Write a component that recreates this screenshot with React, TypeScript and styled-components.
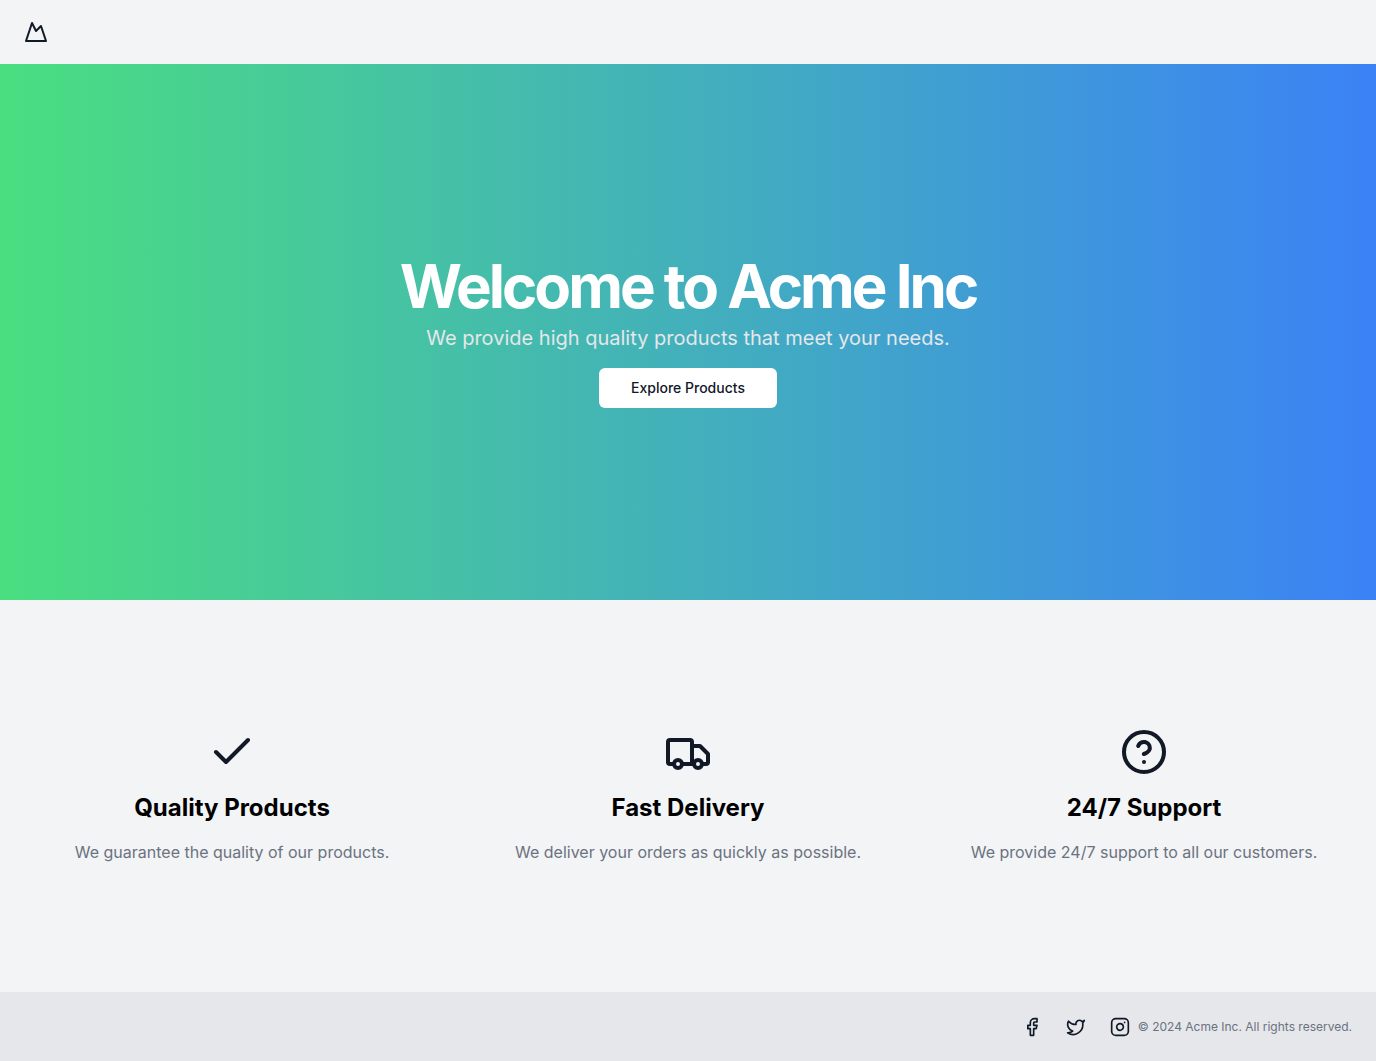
import React from "react";
import styled, { createGlobalStyle } from "styled-components";
import { Check, CircleHelp, Facebook, Twitter, Instagram } from "lucide-react";

const GlobalStyle = createGlobalStyle`
  *, *::before, *::after { box-sizing: border-box; }
  body { margin: 0; background: #f3f4f6; font-family: Inter, sans-serif; color: #030712; line-height: 24px; }
  h1, h2, p { margin: 0; }
`;

const Page = styled.div`
  display: flex;
  flex-direction: column;
  min-height: 100vh;
`;

const Header = styled.header`
  display: flex;
  align-items: center;
  height: 64px;
  padding: 0 24px;
`;

const IconLink = styled.a`
  display: flex;
  color: #111827;
`;

const Main = styled.main`
  flex: 1;
`;

const Hero = styled.section`
  display: flex;
  flex-direction: column;
  align-items: center;
  padding: 192px 24px;
  background: linear-gradient(to right, #4ade80, #3b82f6);
  text-align: center;
`;

const HeroTitle = styled.h1`
  color: #ffffff;
  font-size: 60px;
  font-weight: 700;
  line-height: 60px;
  letter-spacing: -0.05em;
`;

const HeroText = styled.p`
  margin: 8px 0 16px;
  color: #e5e7eb;
  font-size: 20px;
  line-height: 28px;
`;

const HeroButton = styled.button`
  height: 40px;
  padding: 0 32px;
  border: 0;
  border-radius: 6px;
  background: #ffffff;
  color: #111827;
  font-family: inherit;
  font-size: 14px;
  font-weight: 500;
  line-height: 20px;
  cursor: pointer;
`;

const Features = styled.section`
  display: grid;
  grid-template-columns: repeat(3, 1fr);
  gap: 40px;
  padding: 128px 24px;

  @media (max-width: 768px) {
    grid-template-columns: 1fr;
  }
`;

const Feature = styled.article`
  display: flex;
  flex-direction: column;
  align-items: center;
  gap: 16px;
  text-align: center;
  color: #111827;
`;

const FeatureTitle = styled.h2`
  color: #000000;
  font-size: 24px;
  font-weight: 700;
  line-height: 32px;
`;

const FeatureText = styled.p`
  color: #6b7280;
  font-size: 16px;
  line-height: 24px;
`;

const Footer = styled.footer`
  display: flex;
  align-items: center;
  justify-content: flex-end;
  gap: 8px;
  padding: 24px;
  border-top: 1px solid #e5e7eb;
  background: #e5e7eb;
`;

const Social = styled.nav`
  display: flex;
  gap: 24px;
`;

const Copyright = styled.p`
  color: #6b7280;
  font-size: 12px;
  line-height: 16px;
`;

const lineIcon = {
  viewBox: "0 0 24 24",
  fill: "none",
  stroke: "currentColor",
  strokeWidth: 2,
  strokeLinecap: "round",
  strokeLinejoin: "round",
  "aria-hidden": true,
} as const;

const MountainIcon = ({ size = 24 }: { size?: number }) => (
  <svg width={size} height={size} {...lineIcon}>
    <path d="m8 3 4 8 5-5 5 15H2L8 3z" />
  </svg>
);

const TruckIcon = ({ size = 24 }: { size?: number }) => (
  <svg width={size} height={size} {...lineIcon}>
    <path d="M5 18H3c-.6 0-1-.4-1-1V7c0-.6.4-1 1-1h10c.6 0 1 .4 1 1v11" />
    <path d="M14 9h4l4 4v4c0 .6-.4 1-1 1h-2" />
    <circle cx="7" cy="18" r="2" />
    <path d="M15 18H9" />
    <circle cx="17" cy="18" r="2" />
  </svg>
);

const features = [
  { Icon: Check, title: "Quality Products", text: "We guarantee the quality of our products." },
  { Icon: TruckIcon, title: "Fast Delivery", text: "We deliver your orders as quickly as possible." },
  { Icon: CircleHelp, title: "24/7 Support", text: "We provide 24/7 support to all our customers." },
];

const socials = [
  { Icon: Facebook, label: "Facebook" },
  { Icon: Twitter, label: "Twitter" },
  { Icon: Instagram, label: "Instagram" },
];

export default function App() {
  return (
    <Page>
      <GlobalStyle />
      <Header>
        <IconLink href="#" aria-label="Acme Inc"><MountainIcon /></IconLink>
      </Header>
      <Main>
        <Hero>
          <HeroTitle>Welcome to Acme Inc</HeroTitle>
          <HeroText>We provide high quality products that meet your needs.</HeroText>
          <HeroButton type="button">Explore Products</HeroButton>
        </Hero>
        <Features>
          {features.map(({ Icon, title, text }) => (
            <Feature key={title}>
              <Icon size={48} />
              <FeatureTitle>{title}</FeatureTitle>
              <FeatureText>{text}</FeatureText>
            </Feature>
          ))}
        </Features>
      </Main>
      <Footer>
        <Social aria-label="Social media">
          {socials.map(({ Icon, label }) => (
            <IconLink key={label} href="#" aria-label={label}><Icon size={20} /></IconLink>
          ))}
        </Social>
        <Copyright>© 2024 Acme Inc. All rights reserved.</Copyright>
      </Footer>
    </Page>
  );
}
